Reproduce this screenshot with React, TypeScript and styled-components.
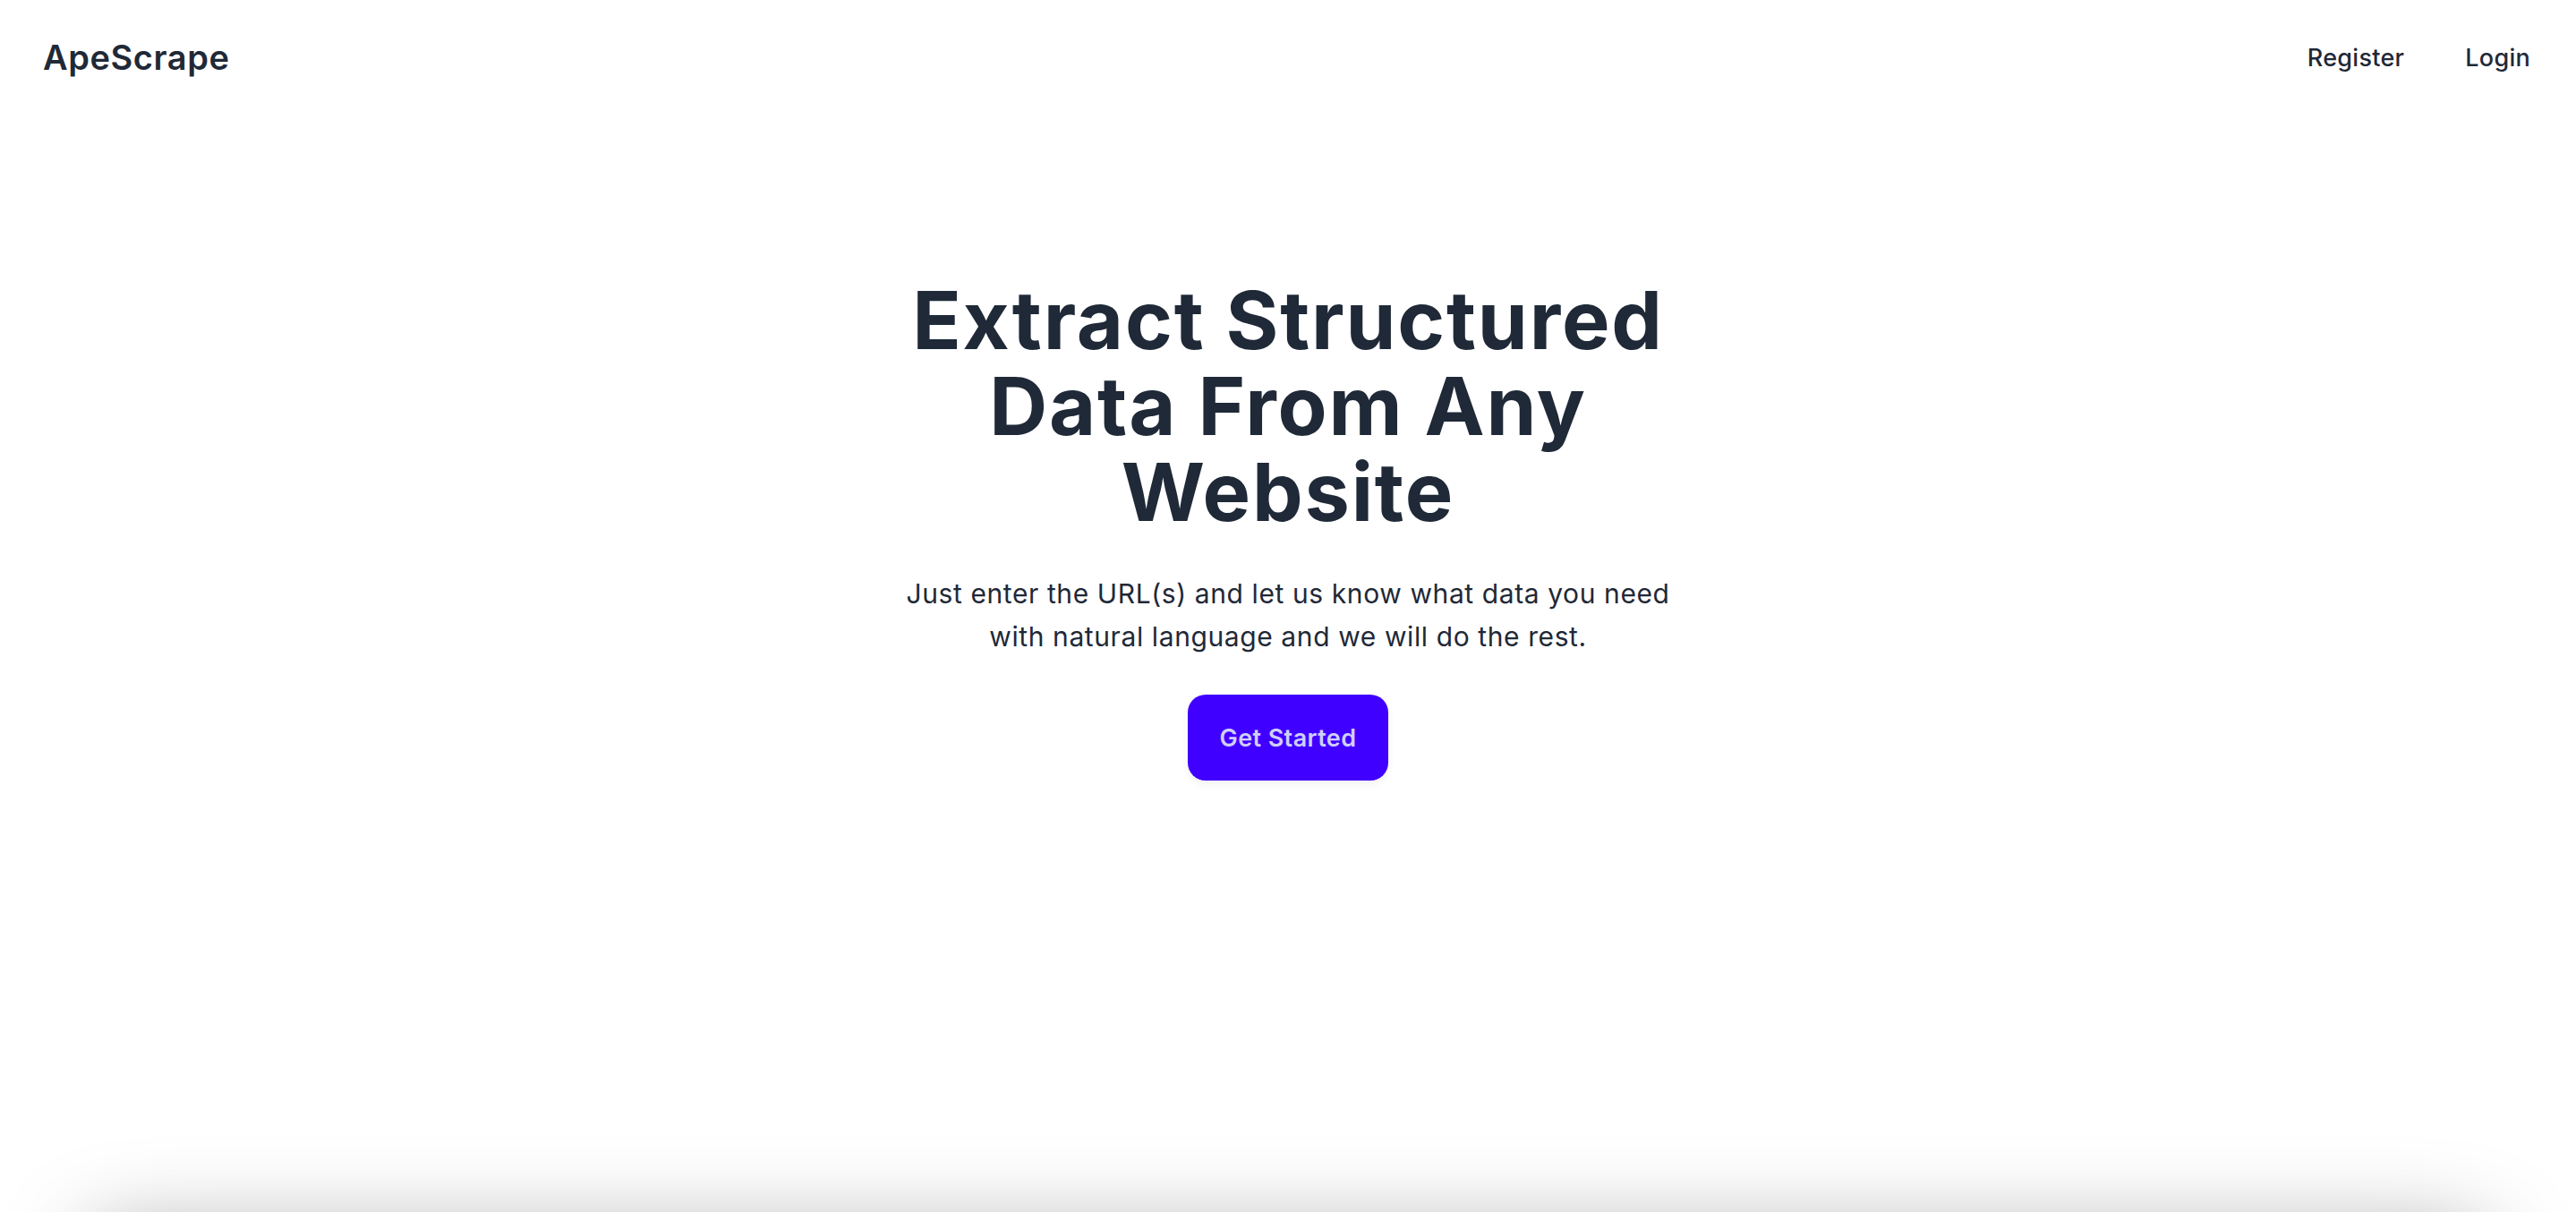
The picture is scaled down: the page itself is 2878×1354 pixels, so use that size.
import React from "react";
import styled, { createGlobalStyle } from "styled-components";

const GlobalStyle = createGlobalStyle`
  * {
    box-sizing: border-box;
  }
  html, body {
    margin: 0;
    padding: 0;
    background: #ffffff;
  }
  body {
    font-family: Inter, "Noto Sans", Arial, sans-serif;
    color: #1f2937;
    -webkit-font-smoothing: antialiased;
  }
`;

const Page = styled.div`
  display: flex;
  flex-direction: column;
  overflow: hidden;
`;

const Header = styled.header`
  height: 128px;
  padding: 0 51px 0 48px;
  display: flex;
  align-items: center;
  justify-content: space-between;
`;

const Logo = styled.a`
  font-size: 38px;
  font-weight: 600;
  letter-spacing: 0.015em;
  color: #1f2937;
  text-decoration: none;
`;

const Nav = styled.nav`
  display: flex;
  align-items: center;
  gap: 68px;
`;

const NavLink = styled.a`
  font-size: 27px;
  font-weight: 500;
  letter-spacing: 0.01em;
  color: #1f2937;
  text-decoration: none;
  cursor: pointer;
`;

const Hero = styled.section`
  height: 1252px;
  padding-top: 182px;
  display: flex;
  flex-direction: column;
  align-items: center;
  text-align: center;
`;

const Title = styled.h1`
  margin: 0;
  font-size: 90px;
  line-height: 96px;
  font-weight: 700;
  letter-spacing: 0.02em;
  color: #1f2937;
`;

const Subtitle = styled.p`
  margin: 41px 0 0;
  font-size: 30px;
  line-height: 48px;
  font-weight: 400;
  letter-spacing: 0.02em;
  color: #1f2937;
`;

const CTA = styled.button`
  margin-top: 41px;
  width: 224px;
  height: 96px;
  border: none;
  border-radius: 20px;
  background: #4000ff;
  color: #cfcfff;
  font-family: inherit;
  font-size: 27px;
  font-weight: 600;
  letter-spacing: 0.015em;
  box-shadow: 0 4px 10px rgba(0, 0, 0, 0.06);
  cursor: pointer;
`;

const Preview = styled.section`
  margin: 0 100px;
  height: 640px;
  border-radius: 24px;
  background: #ffffff;
  box-shadow: 0 0 100px rgba(0, 0, 0, 0.37);
`;

export default function App() {
  return (
    <>
      <GlobalStyle />
      <Page>
        <Header>
          <Logo>ApeScrape</Logo>
          <Nav>
            <NavLink>Register</NavLink>
            <NavLink>Login</NavLink>
          </Nav>
        </Header>
        <Hero>
          <Title>
            Extract Structured
            <br />
            Data From Any
            <br />
            Website
          </Title>
          <Subtitle>
            Just enter the URL(s) and let us know what data you need
            <br />
            with natural language and we will do the rest.
          </Subtitle>
          <CTA>Get Started</CTA>
        </Hero>
        <Preview />
      </Page>
    </>
  );
}
